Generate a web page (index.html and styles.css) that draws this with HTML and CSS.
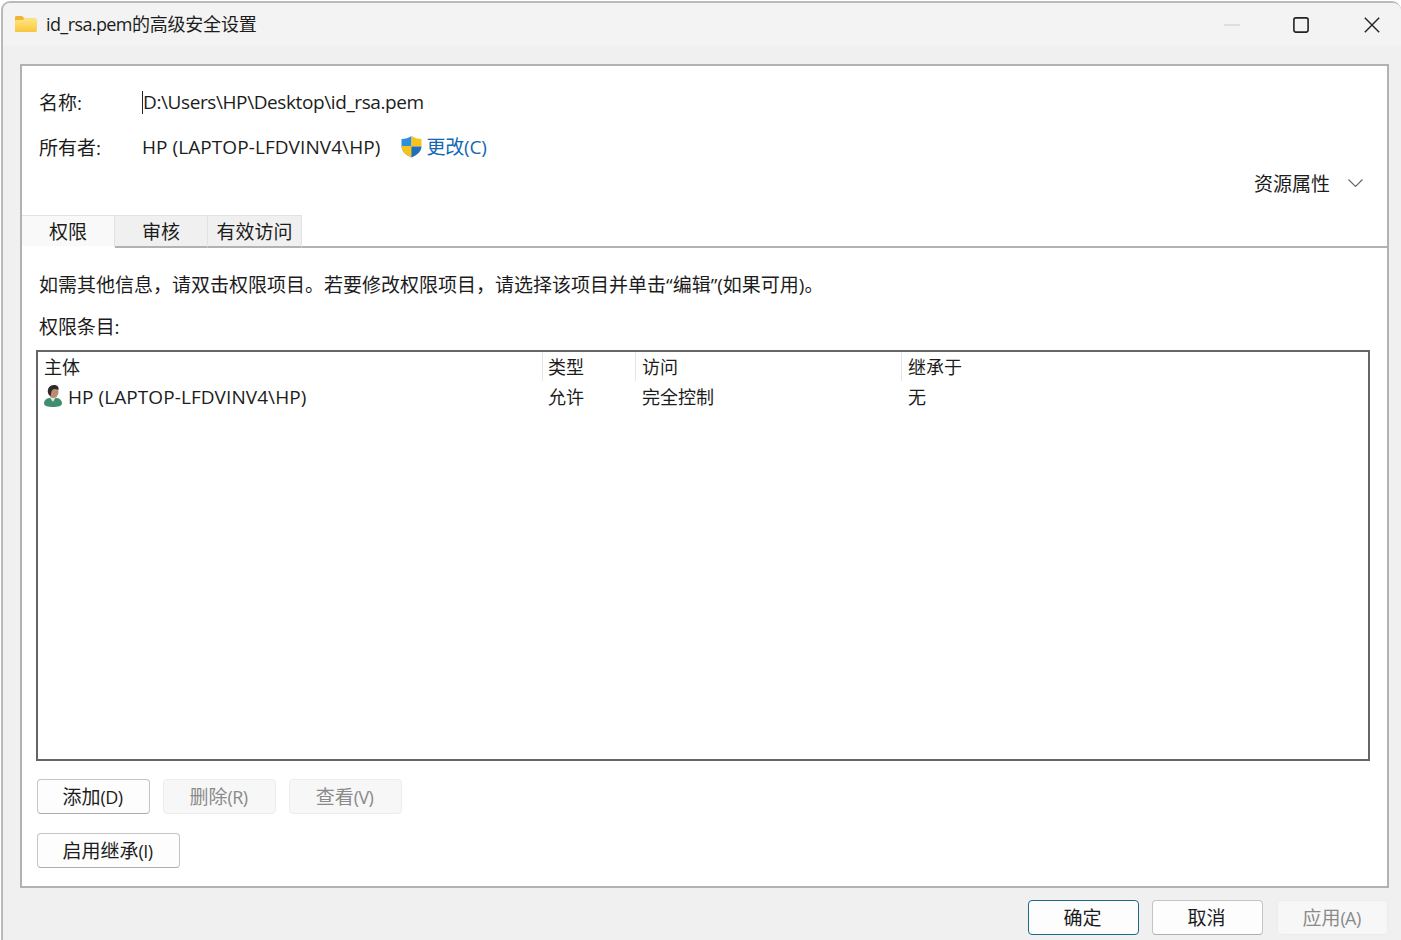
FILE: index.html
```html
<!DOCTYPE html>
<html lang="zh-CN">
<head>
<meta charset="utf-8">
<title>id_rsa.pem的高级安全设置</title>
<link rel="stylesheet" href="styles.css">
</head>
<body>
<div class="window">
  <header class="titlebar">
    <svg class="folder" width="23" height="18" viewBox="0 0 23 18">
      <defs><linearGradient id="fg" x1="0" y1="0" x2="0" y2="1"><stop offset="0" stop-color="#ffe680"/><stop offset="1" stop-color="#f8c63d"/></linearGradient></defs>
      <path d="M1 2.500C1 1.500 1.600 1 2.500 1H8l2.500 2.500H21c.8 0 1.500.6 1.500 1.500v10.500c0 1-.7 1.500-1.500 1.500H2.500C1.600 17 1 16.500 1 15.500Z" fill="#eeb636"/>
      <path d="M1 6.500C1 5.600 1.600 5 2.500 5H8.500L10.500 3.500H21c.8 0 1.500.6 1.500 1.500v10.500c0 1-.7 1.500-1.500 1.500H2.500C1.600 17 1 16.500 1 15.500Z" fill="url(#fg)"/>
    </svg>
    <span class="title"><span class="title-file">id_rsa.pem</span>的高级安全设置</span>
    <div class="controls">
      <svg width="16" height="16" viewBox="0 0 16 16"><path d="M0 8H16" stroke="#c9c9c9" stroke-width="1"/></svg>
      <svg width="16" height="16" viewBox="0 0 16 16"><rect x=".9" y=".9" width="14.200" height="14.200" rx="2" fill="none" stroke="#222" stroke-width="1.600"/></svg>
      <svg class="close" width="16" height="16" viewBox="0 0 16 16"><path d="M.8.8 15.200 15.200M15.200.8.8 15.200" stroke="#222" stroke-width="1.400" fill="none"/></svg>
    </div>
  </header>

  <main class="panel">
    <div class="info-grid">
      <span class="label">名称:</span>
      <span class="path">D:\Users\HP\Desktop\id_rsa.pem</span>
      <span class="label">所有者:</span>
      <div class="owner">
        <span class="owner-name">HP (LAPTOP-LFDVINV4\HP)</span>
        <svg class="shield" width="23" height="23" viewBox="0 0 23 23">
          <path d="M11.500 1C8.500 3 5.500 3.800 1.500 4V11C1.500 16.500 6 20 11.500 22.500Z" fill="#2f8fdc"/>
          <path d="M11.500 1C14.500 3 17.500 3.800 21.500 4V11.500H11.500Z" fill="#f7c21c"/>
          <path d="M1.500 11H11.500V22.500C6 20 1.500 16.500 1.500 11Z" fill="#f7c21c"/>
          <path d="M11.500 11.500H21.500C21.500 16.500 17 20 11.500 22.500Z" fill="#1f6fb8"/>
        </svg>
        <a class="link">更改(C)</a>
      </div>
    </div>

    <div class="props">
      <span>资源属性</span>
      <svg width="15" height="8" viewBox="0 0 15 8"><path d="M.5.5 7.500 7.500 14.500.5" fill="none" stroke="#666" stroke-width="1.100"/></svg>
    </div>

    <nav class="tabs">
      <div class="tab active">权限</div>
      <div class="tab second">审核</div>
      <div class="tab third">有效访问</div>
      <div class="tab-fill"></div>
    </nav>

    <p class="hint">如需其他信息，请双击权限项目。若要修改权限项目，请选择该项目并单击“编辑”(如果可用)。</p>
    <p class="entries">权限条目:</p>

    <section class="list">
      <div class="list-row list-head">
        <div class="cell">主体</div>
        <div class="cell">类型</div>
        <div class="cell">访问</div>
        <div class="cell">继承于</div>
      </div>
      <div class="list-row">
        <div class="cell principal">
          <svg width="18" height="22" viewBox="0 0 18 22">
            <path d="M0 18.500C0 14.500 3.500 12.500 9 12.500S18 14.500 18 18.500C18 21 14 22 9 22S0 21 0 18.500Z" fill="#3f8f6e"/>
            <path d="M6 12.800 9 17 11.500 12.800Z" fill="#dcebe3"/>
            <ellipse cx="9.500" cy="7" rx="5" ry="6" fill="#b98c74"/>
            <path d="M4 8C3 3 6 0 10 0S15 2.500 14.500 5C12.500 3.800 10.500 3.800 9 4.500 7.500 5.200 7 7.500 6.800 11 5.500 10.500 4.500 9.500 4 8Z" fill="#2f2a28"/>
          </svg>
          <span class="principal-name">HP (LAPTOP-LFDVINV4\HP)</span>
        </div>
        <div class="cell">允许</div>
        <div class="cell">完全控制</div>
        <div class="cell">无</div>
      </div>
    </section>

    <div class="btn-row first">
      <button class="btn">添加<small>(D)</small></button>
      <button class="btn off">删除<small>(R)</small></button>
      <button class="btn off">查看<small>(V)</small></button>
    </div>
    <div class="btn-row second-row">
      <button class="btn wide">启用继承<small>(I)</small></button>
    </div>
  </main>

  <footer class="footer">
    <button class="btn foot primary">确定</button>
    <button class="btn foot">取消</button>
    <button class="btn foot off">应用<small>(A)</small></button>
  </footer>
</div>
</body>
</html>
```
FILE: styles.css
```css
* { box-sizing: border-box; }
html, body { margin: 0; padding: 0; background: #fff; }
body {
  width: 1401px;
  height: 940px;
  overflow: hidden;
  font-family: "Open Sans", "Noto Sans CJK SC", sans-serif;
  color: #1c1c1c;
  font-size: 19px;
}
.window {
  margin: 1px 0 0 1px;
  width: 1400px;
  height: 939px;
  border-top: 2px solid #b9b9b9;
  border-left: 2px solid #b9b9b9;
  border-radius: 9px 9px 0 0;
  background: #f0f0f0;
  display: flex;
  flex-direction: column;
  overflow: hidden;
}
.titlebar {
  height: 43px;
  flex: none;
  background: #f3f3f3;
  display: flex;
  align-items: center;
  padding: 0 21px 0 11px;
}
.folder { flex: none; margin-top: -2px; }
.title { margin-left: 9px; margin-top: -3px; font-size: 18px; letter-spacing: -.2px; }
.title-file { letter-spacing: -.6px; }
.controls { margin-left: auto; display: flex; gap: 53px; align-items: center; }
.controls svg { display: block; }
.controls .close { margin-left: 2px; }

.panel {
  margin: 18px 12px 0 17px;
  width: 1369px;
  height: 824px;
  flex: none;
  background: #fff;
  border: 2px solid #b2b2b2;
  display: flex;
  flex-direction: column;
}
.info-grid {
  margin: 21px 0 0 17px;
  display: grid;
  grid-template-columns: 103px 1fr;
  grid-auto-rows: 30px;
  row-gap: 15px;
  align-items: center;
}
.label { font-size: 19px; }
.path { border-left: 1px solid #222; line-height: 23px; height: 23px; letter-spacing: -.4px; }
.owner { display: flex; align-items: center; margin-top: -2px; }
.owner-name { letter-spacing: .07px; margin-top: 2px; }
.shield { margin-left: 20px; flex: none; }
.link { margin-left: 3px; color: #1167b1; letter-spacing: -.15px; }
.props {
  margin-top: 7px;
  height: 30px;
  display: flex;
  justify-content: flex-end;
  align-items: center;
  gap: 18px;
  padding: 0 24px 2px 0;
}
.tabs { margin-top: 16px; display: flex; height: 33px; flex: none; }
.tab {
  display: flex;
  align-items: center;
  justify-content: center;
  border-top: 1px solid #e2e2e2;
  border-right: 1px solid #e2e2e2;
  border-bottom: 2px solid #b2b2b2;
  background: #f0f0f0;
}
.tab.active { width: 93px; background: #f9f9f9; border-bottom: 2px solid #fff; }
.tab.second { width: 93px; }
.tab.third { width: 94px; }
.tab-fill { flex: 1; border-bottom: 2px solid #b2b2b2; }
.hint { margin: 24px 0 0 17px; line-height: 26px; height: 26px; font-size: 19px; }
.entries { margin: 16px 0 0 17px; line-height: 26px; height: 26px; font-size: 19px; letter-spacing: -.1px; }
.list {
  margin: 10px 0 0 14px;
  width: 1334px;
  height: 411px;
  border: 2px solid #666;
  flex: none;
  font-size: 18px;
}
.list-row {
  display: grid;
  grid-template-columns: 505px 93px 266px 1fr;
}
.list-head { height: 29px; }
.list-head .cell { border-right: 1px solid #e5e5e5; height: 29px; padding-top: 2px; }
.list-head .cell:last-child { border-right: 0; }
.cell { padding-left: 6px; line-height: 26px; }
.list-row .cell:nth-child(2) { padding-left: 5px; }
.list-row .cell:nth-child(n+3) { padding-left: 6px; }
.list-row:not(.list-head) .cell { padding-top: 3px; }
.list-row .cell.principal { display: flex; align-items: center; gap: 6px; padding-left: 6px; }
.principal-name { font-size: 19px; letter-spacing: .07px; }
.principal svg { flex: none; margin-top: -3px; }

.btn-row { margin-left: 15px; display: flex; gap: 13px; }
.btn-row.first { margin-top: 18px; }
.btn-row.second-row { margin-top: 19px; }
.btn {
  width: 113px;
  height: 35px;
  font: inherit;
  font-size: 19px;
  line-height: 1;
  padding: 1px 2px 0 0;
  color: #1c1c1c;
  background: #fdfdfd;
  border: 1px solid #c4c4c4;
  border-bottom-color: #aeaeae;
  border-radius: 4px;
}
.btn small { font-size: 18px; letter-spacing: -.6px; }
.btn.wide { width: 143px; }
.btn.off { color: #8a8a8a; background: #f7f7f7; border-color: #ececec; }
.footer {
  margin-top: 12px;
  padding-right: 13px;
  display: flex;
  justify-content: flex-end;
  gap: 13px;
}
.btn.foot { width: 111px; height: 35px; padding-top: 2px; }
.footer .btn:last-child { margin-left: 1px; }
.btn.primary { border: 1.500px solid #1a6a8c; background: #fdfdfd; }
```
